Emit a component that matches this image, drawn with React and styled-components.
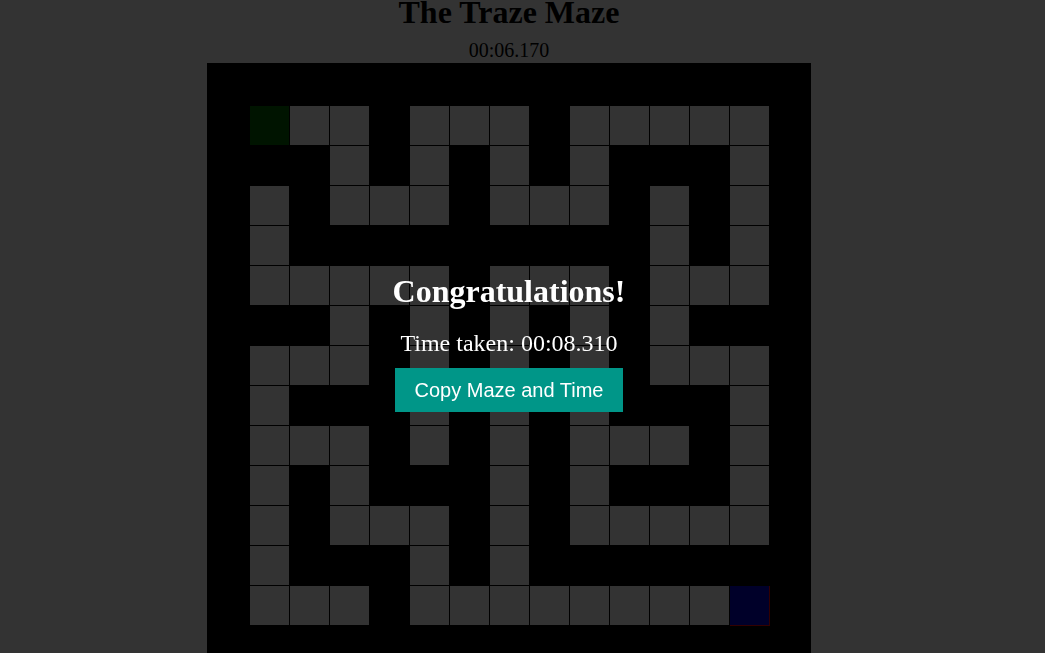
import React from 'react'
import styled, { createGlobalStyle } from 'styled-components'

const MAZE = [
  '###############',
  '#S..#...#.....#',
  '###.#.#.#.###.#',
  '#.#...#...#.#.#',
  '#.#########.#.#',
  '#.....#...#...#',
  '###.#.#.#.#.###',
  '#...#.#.#.#...#',
  '#.###.#.#.###.#',
  '#...#.#.#...#.#',
  '#.#.###.#.###.#',
  '#.#...#.#.....#',
  '#.###.#.#######',
  '#...#........E#',
  '###############',
]

const kindOf = (ch) => {
  if (ch === '#') return 'wall'
  if (ch === 'S') return 'start'
  if (ch === 'E') return 'end'
  return 'path'
}

export default function App() {
  return (
    <>
      <GlobalStyle />
      <Page>
        <Title>The Traze Maze</Title>
        <Timer>00:06.170</Timer>
        <Board>
          <Grid>
            {MAZE.map((row, r) =>
              row.split('').map((ch, c) => (
                <Cell key={r + '-' + c} $kind={kindOf(ch)} />
              ))
            )}
          </Grid>
        </Board>
      </Page>
      <Overlay>
        <Modal>
          <Heading>Congratulations!</Heading>
          <TimeTaken>Time taken: 00:08.310</TimeTaken>
          <CopyButton>Copy Maze and Time</CopyButton>
        </Modal>
      </Overlay>
    </>
  )
}

const GlobalStyle = createGlobalStyle`
  html, body {
    margin: 0;
    padding: 0;
    background: #fff;
    overflow: hidden;
    font-family: 'Liberation Serif', 'Times New Roman', serif;
  }
`

const Page = styled.div`
  width: 1018px;
  display: flex;
  flex-direction: column;
  align-items: center;
  color: #000;
`

const Title = styled.h1`
  margin: 0 0 15px;
  font-size: 32px;
  line-height: 24px;
  font-weight: bold;
`

const Timer = styled.div`
  margin: 0 0 1px;
  font-size: 20px;
  line-height: 23px;
`

const Board = styled.div`
  background: #000;
  padding: 3px 1px 1px 3px;
`

const Grid = styled.div`
  display: grid;
  grid-template-columns: repeat(15, 40px);
  grid-auto-rows: 40px;
`

const cellColors = {
  wall: '#000',
  path: '#fff',
  start: '#006400',
  end: '#0000cd',
}

const Cell = styled.div`
  box-sizing: border-box;
  background: ${(p) => cellColors[p.$kind]};
  border-right: 1px solid ${(p) => (p.$kind === 'end' ? '#f00' : '#000')};
  border-bottom: 1px solid ${(p) => (p.$kind === 'end' ? '#f00' : '#000')};
`

const Overlay = styled.div`
  position: fixed;
  inset: 0;
  background: rgba(0, 0, 0, 0.8);
  display: flex;
  align-items: center;
  justify-content: center;
  padding-right: 27px;
`

const Modal = styled.div`
  display: flex;
  flex-direction: column;
  align-items: center;
  padding-top: 32px;
  color: #fff;
`

const Heading = styled.h2`
  margin: 0 0 20px;
  font-size: 32px;
  line-height: 36px;
  font-weight: bold;
`

const TimeTaken = styled.p`
  margin: 0 0 11px;
  font-size: 24px;
  line-height: 28px;
`

const CopyButton = styled.button`
  border: none;
  background: #009688;
  color: #fff;
  font-family: 'Liberation Sans', Arial, sans-serif;
  font-size: 20px;
  line-height: 24px;
  padding: 10px 20px;
  cursor: pointer;
`
